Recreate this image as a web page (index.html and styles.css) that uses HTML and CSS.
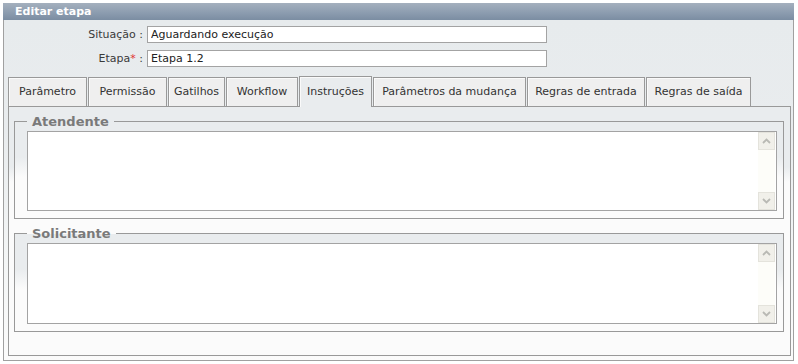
FILE: index.html
```html
<!DOCTYPE html>
<html lang="pt">
<head>
<meta charset="utf-8">
<title>Editar etapa</title>
<link rel="stylesheet" href="styles.css">
</head>
<body>
<div class="window">
  <div class="titlebar">Editar etapa</div>
  <div class="content">
    <div class="form">
      <label class="label" for="situacao">Situação :</label>
      <input class="field" id="situacao" type="text" value="Aguardando execução">
      <label class="label" for="etapa">Etapa<span class="req">*</span> :</label>
      <input class="field" id="etapa" type="text" value="Etapa 1.2">
    </div>
    <div class="tabs">
      <div class="tab t-param">Parâmetro</div>
      <div class="tab t-perm">Permissão</div>
      <div class="tab t-gat">Gatilhos</div>
      <div class="tab t-wf">Workflow</div>
      <div class="tab t-instr active">Instruções</div>
      <div class="tab t-mud">Parâmetros da mudança</div>
      <div class="tab t-ent">Regras de entrada</div>
      <div class="tab t-sai">Regras de saída</div>
    </div>
    <div class="panel">
      <fieldset class="group">
        <legend>Atendente</legend>
        <div class="textbox">
          <textarea class="text"></textarea>
          <div class="scroll">
            <div class="sbtn"><svg width="9" height="6" viewBox="0 0 9 6"><path d="M1 5 L4.5 1.5 L8 5" fill="none" stroke="#b9b9b4" stroke-width="1.8"/></svg></div>
            <div class="sbtn"><svg width="9" height="6" viewBox="0 0 9 6"><path d="M1 1 L4.5 4.5 L8 1" fill="none" stroke="#b9b9b4" stroke-width="1.8"/></svg></div>
          </div>
        </div>
      </fieldset>
      <fieldset class="group second">
        <legend>Solicitante</legend>
        <div class="textbox">
          <textarea class="text"></textarea>
          <div class="scroll">
            <div class="sbtn"><svg width="9" height="6" viewBox="0 0 9 6"><path d="M1 5 L4.5 1.5 L8 5" fill="none" stroke="#b9b9b4" stroke-width="1.8"/></svg></div>
            <div class="sbtn"><svg width="9" height="6" viewBox="0 0 9 6"><path d="M1 1 L4.5 4.5 L8 1" fill="none" stroke="#b9b9b4" stroke-width="1.8"/></svg></div>
          </div>
        </div>
      </fieldset>
    </div>
  </div>
</div>
</body>
</html>
```

FILE: styles.css
```css
html, body {
  margin: 0;
  padding: 0;
  background: #ffffff;
}
body {
  font-family: "DejaVu Sans", Verdana, sans-serif;
  font-size: 11px;
  color: #333333;
}
.window {
  margin: 3px 0 0 3px;
  width: 791px;
}
.titlebar {
  height: 17px;
  line-height: 17px;
  padding-left: 12px;
  color: #ffffff;
  font-weight: bold;
  font-size: 11px;
  background: linear-gradient(#a4b0be, #8d9db0 55%, #7b8da2);
}
.content {
  border: 1px solid #a0a0a0;
  border-top: 0;
  padding: 6px 2px 4px 4px;
  background: linear-gradient(#e7ebed 0, #e9ecee 110px, #f4f6f6 240px, #fbfbfb 100%);
}
.form {
  display: grid;
  grid-template-columns: 135px 400px;
  column-gap: 4px;
  row-gap: 7px;
  align-items: center;
}
.label {
  text-align: right;
  color: #3a3a3a;
  white-space: nowrap;
}
.req {
  color: #e03030;
}
.field {
  box-sizing: border-box;
  width: 400px;
  height: 17px;
  border: 1px solid #a3a3a3;
  background: #ffffff;
  font-family: "DejaVu Sans", Verdana, sans-serif;
  font-size: 11px;
  color: #222222;
  padding: 0 3px;
  margin: 0;
  outline: none;
}
.tabs {
  display: flex;
  align-items: flex-end;
  gap: 1px;
  margin-top: 9px;
  margin-bottom: -1px;
  position: relative;
  z-index: 1;
}
.tab {
  box-sizing: border-box;
  height: 30px;
  line-height: 28px;
  padding: 0;
  text-align: center;
  border: 1px solid #999999;
  background: #efefef;
  box-shadow: inset 1px 1px 0 #fafafa;
  color: #333333;
  white-space: nowrap;
}
.t-param { width: 79px; }
.t-perm { width: 79px; }
.t-gat { width: 57px; }
.t-wf { width: 72px; }
.t-instr { width: 73px; }
.t-mud { width: 153px; }
.t-ent { width: 118px; }
.t-sai { width: 105px; }
.tab.active {
  height: 31px;
  line-height: 30px;
  border-bottom: 0;
  background: #e9ecee;
}
.panel {
  border: 1px solid #999999;
  padding: 7px 6px 23px 5px;
  background: linear-gradient(#e9ecee 0, #e9ecee 60px, #fbfbfb 75px, #fbfbfb 100%);
}
.group {
  margin: 0;
  border: 1px solid #999999;
  padding: 2px 6px 7px 12px;
  background: linear-gradient(#e9ecee 0, #e9ecee 35px, #fbfbfb 55px, #fbfbfb 100%);
}
.group.second {
  margin-top: 7px;
}
.group.second .textbox {
  height: 81px;
}
legend {
  font-size: 13px;
  line-height: 15px;
  font-weight: bold;
  color: #7a7a7a;
  padding: 0 5px;
  margin-left: 0;
}
.textbox {
  box-sizing: border-box;
  height: 80px;
  border: 1px solid #a3a3a3;
  background: #ffffff;
  display: flex;
}
.text {
  flex: 1;
  border: 0;
  margin: 0;
  padding: 2px 3px;
  resize: none;
  outline: none;
  overflow: hidden;
  background: transparent;
  font-family: "DejaVu Sans", Verdana, sans-serif;
  font-size: 11px;
}
.scroll {
  width: 17px;
  margin-right: 1px;
  background: #fdfdf9;
  display: flex;
  flex-direction: column;
  justify-content: space-between;
}
.sbtn {
  box-sizing: border-box;
  height: 18px;
  border: 1px solid #e4e3dc;
  background: #f1f0ea;
  display: flex;
  align-items: center;
  justify-content: center;
}
```
